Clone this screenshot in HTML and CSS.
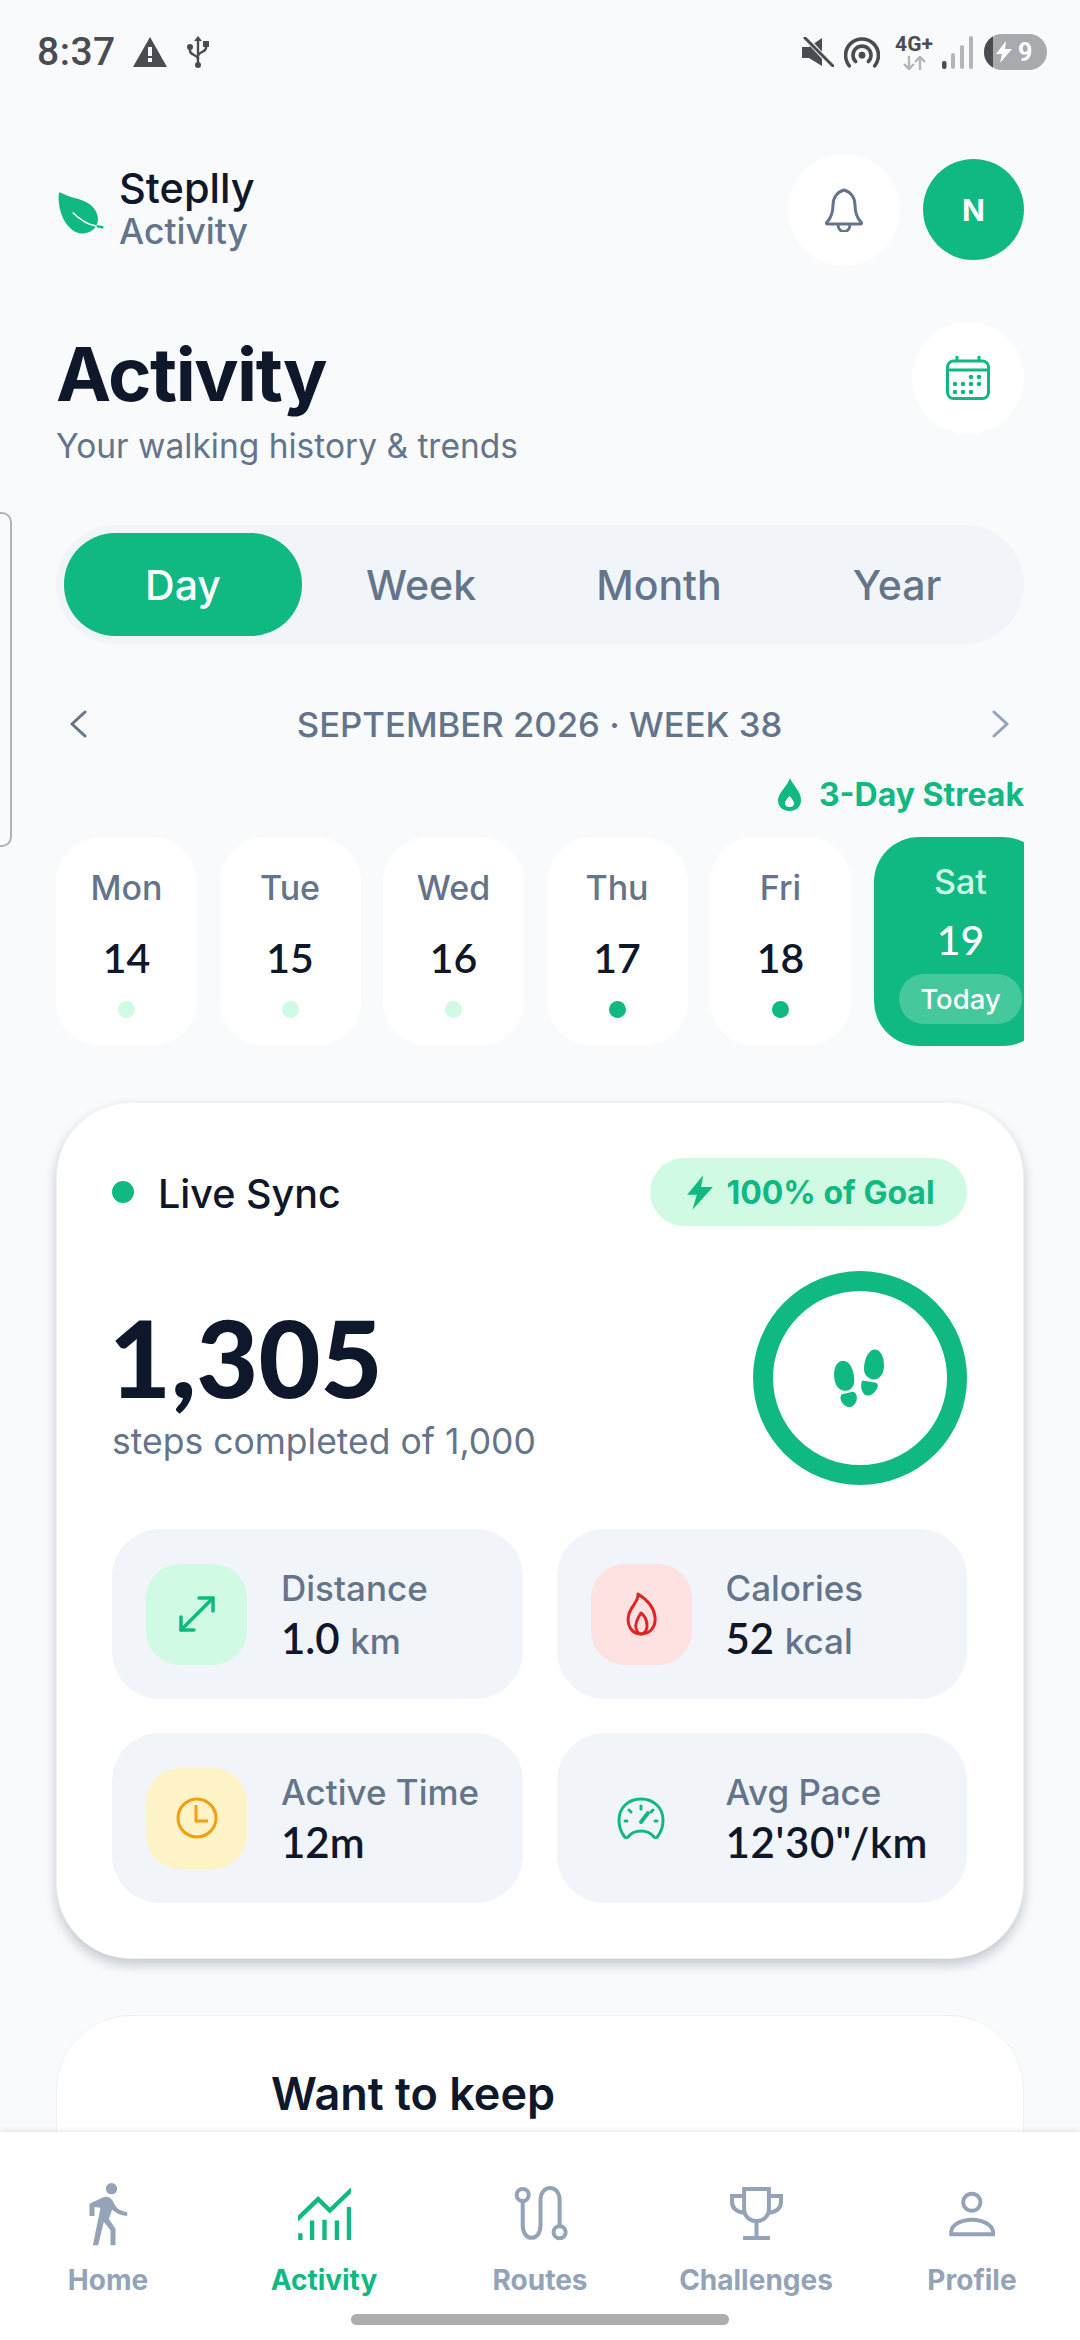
FILE: index.html
```html
<!DOCTYPE html>
<html lang="en">
    <head>
        <meta charset="UTF-8" />
        <meta name="viewport" content="width=device-width, initial-scale=1.0" />
        <title>Steplly Activity</title>
        <link rel="stylesheet" href="styles.css">
    </head>
    <body>
        <div class="app">
            <div class="status-bar">
                <div class="status-left">
                    <span class="status-time">8:37</span>
                    <svg class="warn-icon" viewBox="0 0 34 30"><path d="M17 0 L34 30 H0 Z" fill="#4a4c52"/><rect x="15" y="10" width="4" height="9" fill="#f8fafc"/><rect x="15" y="21" width="4" height="4" fill="#f8fafc"/></svg>
                    <svg class="usb-icon" viewBox="0 0 24 32" fill="none" stroke="#4a4c52" stroke-width="2.4"><path d="M12 4 V28"/><path d="M4 11 V15 C4 19 12 19 12 23"/><path d="M20 8 V12 C20 16 12 16 12 20"/><circle cx="4" cy="11" r="3" fill="#4a4c52" stroke="none"/><rect x="17" y="5" width="6" height="6" fill="#4a4c52" stroke="none"/><circle cx="12" cy="29" r="3" fill="#4a4c52" stroke="none"/><path d="M8 5 L12 0 L16 5 Z" fill="#4a4c52" stroke="none"/></svg>
                </div>
                <div class="status-right">
                    <svg class="mute-icon" viewBox="0 0 32 30"><path d="M0 10 H7 L20 1 V29 L7 21 H0 Z" fill="#4a4c52"/><path d="M3 0 L31 30" stroke="#f8fafc" stroke-width="5"/><path d="M3 1 L31 29" stroke="#4a4c52" stroke-width="3" stroke-linecap="round"/></svg>
                    <svg class="hotspot-icon" viewBox="0 0 34 30" fill="none" stroke="#4a4c52" stroke-width="3.400" stroke-linecap="round"><path d="M5 28 A15.500 15.500 0 1 1 29 28"/><path d="M11 24 A8.500 8.500 0 1 1 23 24"/><circle cx="17" cy="18" r="3.200" fill="#4a4c52" stroke="none"/></svg>
                    <div class="net-type">
                        <span class="net-label">4G+</span>
                        <svg class="net-arrows" viewBox="0 0 24 14" fill="none" stroke="#b4b5b8" stroke-width="2.400"><path d="M7 0 V13 M2 8 L7 13 L12 8"/><path d="M18 14 V1 M13 6 L18 1 L23 6"/></svg>
                    </div>
                    <svg class="signal-icon" viewBox="0 0 31 33" fill="#b4b5b8"><rect x="0" y="25" width="4.500" height="8" rx="2" fill="#4a4c52"/><rect x="9" y="17" width="4" height="16" rx="2"/><rect x="18" y="9" width="4" height="24" rx="2"/><rect x="27" y="0" width="4" height="33" rx="2"/></svg>
                    <div class="battery">
                        <span class="battery-fill"></span>
                        <svg class="battery-bolt" viewBox="0 0 16 22"><path d="M10 0 L0 13 H6 L4 22 L16 8 H9 Z" fill="#fff"/></svg>
                        <span class="battery-level">9</span>
                    </div>
                </div>
            </div>

            <div class="content">
                <header class="top-row">
                    <div class="brand">
                        <svg class="leaf" viewBox="50 105 150 140"><path d="M60 115 C62 112 68 120 100 130 C150 140 178 165 176 200 C172 225 150 240 125 238 C85 232 55 180 58 120 Z" fill="#10b981"/><path d="M100 175 C120 195 145 212 172 216" fill="none" stroke="#f8fafc" stroke-width="5"/><path d="M172 216 L192 220" stroke="#10b981" stroke-width="7"/></svg>
                        <div class="brand-text">
                            <div class="brand-name">Steplly</div>
                            <div class="brand-sub">Activity</div>
                        </div>
                    </div>
                    <div class="top-actions">
                        <div class="round-btn">
                            <svg class="bell" viewBox="0 0 38 44" fill="none" stroke="#64748b" stroke-width="3" stroke-linejoin="round"><path d="M19 2 C12 4 8 10 8 17 C8 26 6 30 2 34 C1 35 1 36 3 36 H35 C37 36 37 35 36 34 C32 30 30 26 30 17 C30 10 26 4 19 2 Z"/><path d="M13 36 C13 46 25 46 25 36"/></svg>
                        </div>
                        <div class="avatar">N</div>
                    </div>
                </header>

                <section class="title-row">
                    <div>
                        <h1 class="page-title">Activity</h1>
                        <p class="page-sub">Your walking history &amp; trends</p>
                    </div>
                    <div class="round-btn">
                        <svg class="calendar" viewBox="0 0 44 44" fill="none" stroke="#10b981" stroke-width="3"><rect x="1.500" y="5" width="41" height="37.500" rx="6"/><path d="M2 14 H42"/><path d="M11 0 V6 M33 0 V6"/><g fill="#10b981" stroke="none"><circle cx="25" cy="21" r="2.300"/><circle cx="33" cy="21" r="2.300"/><circle cx="9" cy="28" r="2.300"/><circle cx="17" cy="28" r="2.300"/><circle cx="25" cy="28" r="2.300"/><circle cx="33" cy="28" r="2.300"/><circle cx="9" cy="36" r="2.300"/><circle cx="17" cy="36" r="2.300"/><circle cx="25" cy="36" r="2.300"/></g></svg>
                    </div>
                </section>

                <div class="tabs">
                    <div class="tab tab-active">Day</div>
                    <div class="tab">Week</div>
                    <div class="tab">Month</div>
                    <div class="tab">Year</div>
                </div>

                <div class="date-nav">
                    <svg class="chevron" viewBox="0 0 17 28" fill="none" stroke="#64748b" stroke-width="3" stroke-linecap="round" stroke-linejoin="round"><path d="M15 2 L2 14 L15 26"/></svg>
                    <span class="date-label">SEPTEMBER 2026 · WEEK 38</span>
                    <svg class="chevron" viewBox="0 0 17 28" fill="none" stroke="#94a3b8" stroke-width="3" stroke-linecap="round" stroke-linejoin="round"><path d="M2 2 L15 14 L2 26"/></svg>
                </div>

                <div class="streak">
                    <svg class="streak-flame" viewBox="0 0 25 33"><path fill-rule="evenodd" d="M13 0 C15 6 24 13 24 22 C24 29 19 33 12.500 33 C6 33 1 29 1 22 C1 15 10 9 13 0 Z M12.500 18 C10 21 8 23 8 25 C8 28 10 29 12.500 29 C15 29 17 28 17 25 C17 23 15 21 12.500 18 Z" fill="#10b981"/></svg>
                    <span>3-Day Streak</span>
                </div>

                <div class="days">
                    <div class="day"><span class="day-name">Mon</span><span class="day-num">14</span><span class="day-dot"></span></div>
                    <div class="day"><span class="day-name">Tue</span><span class="day-num">15</span><span class="day-dot"></span></div>
                    <div class="day"><span class="day-name">Wed</span><span class="day-num">16</span><span class="day-dot"></span></div>
                    <div class="day"><span class="day-name">Thu</span><span class="day-num">17</span><span class="day-dot dot-done"></span></div>
                    <div class="day"><span class="day-name">Fri</span><span class="day-num">18</span><span class="day-dot dot-done"></span></div>
                    <div class="day day-today"><span class="day-name">Sat</span><span class="day-num">19</span><span class="today-pill">Today</span></div>
                </div>

                <section class="card">
                    <div class="card-head">
                        <div class="live"><span class="live-dot"></span><span class="live-text">Live Sync</span></div>
                        <div class="goal-pill">
                            <svg class="goal-bolt" viewBox="0 0 26 32"><path d="M16 0 L1 18 H10 L6 32 L25 11 H14 Z" fill="#10b981"/></svg>
                            100% of Goal
                        </div>
                    </div>

                    <div class="steps-row">
                        <div class="steps-text">
                            <div class="steps-num">1,305</div>
                            <div class="steps-sub">steps completed of 1,000</div>
                        </div>
                        <div class="ring">
                            <svg class="feet" viewBox="300 280 180 200"><g fill="#10b981"><path d="M340 327 C358 327 372 352 373 385 C373 408 358 418 342 417 C322 414 312 395 312 365 C313 343 324 327 340 327 Z"/><path d="M335 427 L368 420 C378 421 382 432 380 445 C375 462 360 470 348 463 C335 455 326 440 335 427 Z"/><path d="M436 293 C452 295 463 315 462 345 C460 370 448 384 430 383 C410 381 400 365 402 345 C405 315 418 292 436 293 Z"/><path d="M398 386 L438 393 C446 396 445 407 437 417 C427 432 412 435 403 427 C393 417 390 395 398 386 Z"/></g></svg>
                        </div>
                    </div>

                    <div class="stats">
                        <div class="stat">
                            <div class="stat-icon icon-mint">
                                <svg class="ico-arrows" viewBox="0 0 36 36" fill="none" stroke="#10b981" stroke-width="3.500" stroke-linecap="round" stroke-linejoin="round"><path d="M2 34 L34 2"/><path d="M20 2 H34 V15"/><path d="M2 21 V34 H15"/></svg>
                            </div>
                            <div>
                                <div class="stat-label">Distance</div>
                                <div class="stat-value">1.0 <span class="stat-unit">km</span></div>
                            </div>
                        </div>
                        <div class="stat">
                            <div class="stat-icon icon-pink">
                                <svg class="ico-flame" viewBox="0 0 31 44" fill="none" stroke="#dc2626" stroke-width="3" stroke-linejoin="round"><path d="M12 2 C13 9 5 14 3 22 C0 32 5 42 15 42 C25 42 30 34 29 25 C28 14 20 7 12 2 Z"/><path d="M15 21 C11 27 9 31 10 36 C11 40 13 42 15.500 42 C19 41 21 38 21 34 C21 29 19 24 15 21 Z"/></svg>
                            </div>
                            <div>
                                <div class="stat-label">Calories</div>
                                <div class="stat-value">52 <span class="stat-unit">kcal</span></div>
                            </div>
                        </div>
                        <div class="stat">
                            <div class="stat-icon icon-yellow">
                                <svg class="ico-clock" viewBox="0 0 42 42" fill="none" stroke="#f59e0b" stroke-width="3"><circle cx="21" cy="21" r="19"/><path d="M20 8 V24 H32"/></svg>
                            </div>
                            <div>
                                <div class="stat-label">Active Time</div>
                                <div class="stat-value">12m</div>
                            </div>
                        </div>
                        <div class="stat">
                            <div class="stat-icon">
                                <svg class="ico-gauge" viewBox="0 0 48 42" fill="none" stroke="#10b981" stroke-width="3" stroke-linecap="round"><path d="M24 2 C11 2 2 11 2 23 C2 30 4 35 7 39 C8 41 10 41 11 40 C14 36 19 34 24 34 C29 34 34 36 37 40 C38 41 40 41 41 39 C44 35 46 30 46 23 C46 11 37 2 24 2 Z"/><path d="M24 9 V12 M12 13 L14 15 M36 13 L34 15 M8 24 H10 M38 24 H40"/><path d="M31 16 L24 25" stroke-width="4"/></svg>
                            </div>
                            <div>
                                <div class="stat-label">Avg Pace</div>
                                <div class="stat-value value-pace">12'30"/km</div>
                            </div>
                        </div>
                    </div>
                </section>

                <section class="card promo">
                    <h2 class="promo-title">Want to keep</h2>
                </section>
            </div>

            <nav class="bottom-nav">
                <div class="nav-item">
                    <svg class="nav-walk" viewBox="50 35 125 195" fill="#94a3b8"><circle cx="123" cy="55" r="17"/><path d="M57 100 L100 80 C115 76 125 85 131 100 C138 115 150 122 170 125 V137 C150 135 135 128 125 118 L115 145 L135 175 V225 H120 V180 L100 155 L83 225 H67 L90 112 L72 110 V137 H57 Z"/></svg>
                    <span>Home</span>
                </div>
                <div class="nav-item nav-active">
                    <svg class="nav-chart" viewBox="680 55 158 155" fill="none" stroke="#10b981" stroke-width="13"><path d="M676 150 L740 88 L775 122 L842 58"/><path d="M687 210 V190 M722 210 V152 M759 210 V150 M796 210 V152 M832 210 V112"/></svg>
                    <span>Activity</span>
                </div>
                <div class="nav-item">
                    <svg class="nav-routes" viewBox="30 45 170 170" fill="none" stroke="#94a3b8" stroke-width="12"><circle cx="62" cy="75" r="18"/><path d="M62 93 V165 C62 215 115 215 115 165 V90 C115 42 172 42 172 90 V168"/><circle cx="172" cy="186" r="18"/></svg>
                    <span>Routes</span>
                </div>
                <div class="nav-item">
                    <svg class="nav-trophy" viewBox="680 45 170 170" fill="none" stroke="#94a3b8" stroke-width="12"><path d="M728 57 H802 V115 C802 165 728 165 728 115 Z"/><path d="M728 78 H692 V95 C692 115 708 125 728 128 M802 78 H838 V95 C838 115 822 125 802 128"/><path d="M765 155 V203 M725 203 H805"/></svg>
                    <span>Challenges</span>
                </div>
                <div class="nav-item">
                    <svg class="nav-profile" viewBox="1335 60 155 145" fill="none" stroke="#94a3b8" stroke-width="12"><circle cx="1412" cy="97" r="26"/><path d="M1350 194 V185 C1352 165 1380 150 1412 150 C1445 150 1472 165 1476 185 V194 Z"/></svg>
                    <span>Profile</span>
                </div>
            </nav>
            <div class="home-bar"></div>
            <div class="side-handle"></div>
        </div>
    </body>
</html>
```

FILE: styles.css
```css
* {
    box-sizing: border-box;
}

html,
body {
    margin: 0;
    padding: 0;
}

body {
    font-family: Inter, "Noto Sans", sans-serif;
    background-color: #f8fafc;
    color: #0f172a;
}

.app {
    position: relative;
    width: 1080px;
    height: 2340px;
    overflow: hidden;
}

/* status bar */
.status-bar {
    display: flex;
    justify-content: space-between;
    align-items: center;
    height: 104px;
    padding: 0 33px 0 37px;
}

.status-left,
.status-right {
    display: flex;
    align-items: center;
}

.status-time {
    font-family: Roboto, sans-serif;
    font-size: 39px;
    font-weight: 500;
    color: #4a4c52;
    letter-spacing: 0.5px;
}

.warn-icon {
    width: 34px;
    height: 30px;
    margin-left: 17px;
}

.usb-icon {
    width: 24px;
    height: 32px;
    margin-left: 19px;
}

.mute-icon {
    width: 32px;
    height: 30px;
}

.hotspot-icon {
    width: 36px;
    height: 32px;
    margin-left: 10px;
}

.net-type {
    display: flex;
    flex-direction: column;
    align-items: center;
    width: 42px;
    margin-left: 13px;
}

.net-label {
    font-family: Roboto, sans-serif;
    font-weight: 700;
    font-size: 21px;
    line-height: 18px;
    color: #4a4c52;
}

.net-arrows {
    width: 24px;
    height: 14px;
    margin-top: 3px;
}

.signal-icon {
    width: 31px;
    height: 33px;
    margin-left: 7px;
}

.battery {
    position: relative;
    display: flex;
    align-items: center;
    width: 63px;
    height: 36px;
    margin-left: 11px;
    padding-left: 12px;
    border-radius: 18px;
    background-color: #a9aaad;
    overflow: hidden;
}

.battery-fill {
    position: absolute;
    left: 0;
    top: 0;
    width: 9px;
    height: 36px;
    background-color: #4a4c52;
}

.battery-bolt {
    width: 16px;
    height: 22px;
}

.battery-level {
    margin-left: 6px;
    font-family: Roboto, sans-serif;
    font-weight: 700;
    font-size: 25px;
    color: #fff;
}

.content {
    padding: 0 56px;
}

/* header */
.top-row {
    display: flex;
    justify-content: space-between;
    align-items: center;
    height: 113px;
    margin-top: 49px;
}

.brand {
    display: flex;
    align-items: center;
    gap: 13px;
}

.leaf {
    width: 50px;
    height: 47px;
    margin-top: 6px;
}

.brand-name {
    font-size: 41.500px;
    line-height: 44px;
    font-weight: 500;
}

.brand-sub {
    margin-top: 1px;
    font-size: 35.500px;
    line-height: 42px;
    font-weight: 500;
    color: #64748b;
}

.top-actions {
    display: flex;
    align-items: center;
    gap: 23px;
}

.round-btn {
    display: flex;
    justify-content: center;
    align-items: center;
    width: 112px;
    height: 112px;
    border-radius: 50%;
    background-color: #fff;
}

.bell {
    width: 38px;
    height: 44px;
}

.avatar {
    display: flex;
    justify-content: center;
    align-items: center;
    width: 101px;
    height: 101px;
    border-radius: 50%;
    background-color: #10b981;
    color: #fff;
    font-size: 30px;
    font-weight: 700;
}

.title-row {
    display: flex;
    justify-content: space-between;
    align-items: flex-start;
    height: 146px;
    margin-top: 56px;
}

.page-title {
    margin: 10px 0 0;
    font-size: 74px;
    line-height: 84px;
    font-weight: 700;
    letter-spacing: -1.5px;
}

.page-sub {
    margin: 10px 0 0;
    font-size: 33.500px;
    line-height: 40px;
    color: #64748b;
}

.calendar {
    width: 44px;
    height: 44px;
}

/* day / week / month / year */
.tabs {
    display: flex;
    height: 119px;
    margin-top: 57px;
    padding: 8px;
    border-radius: 60px;
    background-color: #f1f5f9;
}

.tab {
    flex: 1;
    display: flex;
    justify-content: center;
    align-items: center;
    border-radius: 51px;
    font-size: 41px;
    font-weight: 500;
    color: #64748b;
}

.tab-active {
    background-color: #10b981;
    color: #fff;
}

.date-nav {
    display: flex;
    justify-content: space-between;
    align-items: center;
    height: 40px;
    margin-top: 60px;
    padding: 0 15px 0 14px;
}

.chevron {
    width: 17px;
    height: 28px;
}

.date-label {
    font-size: 34.700px;
    font-weight: 500;
    color: #64748b;
}

.streak {
    display: flex;
    justify-content: flex-end;
    align-items: center;
    gap: 17px;
    height: 40px;
    margin-top: 30px;
    font-size: 32px;
    font-weight: 700;
    color: #10b981;
}

.streak-flame {
    width: 25px;
    height: 33px;
}

.days {
    display: flex;
    gap: 22.500px;
    height: 209px;
    margin-top: 23px;
    overflow: hidden;
}

.day {
    flex: none;
    display: flex;
    flex-direction: column;
    align-items: center;
    width: 141px;
    padding-top: 30px;
    border-radius: 45px;
    background-color: #fff;
}

.day-name {
    font-size: 34px;
    line-height: 42px;
    font-weight: 500;
    color: #64748b;
}

.day-num {
    margin-top: 25px;
    font-family: Lato, sans-serif;
    font-size: 41px;
    line-height: 48px;
    font-weight: 600;
}

.day-dot {
    width: 17px;
    height: 17px;
    margin-top: 19px;
    border-radius: 50%;
    background-color: #d1fae5;
}

.dot-done {
    background-color: #10b981;
}

.day-today {
    width: 174px;
    padding-top: 24px;
    background-color: #10b981;
    color: #fff;
}

.day-today .day-name {
    color: #d1fae5;
}

.day-today .day-num {
    margin-top: 13px;
    font-weight: 500;
}

.today-pill {
    display: flex;
    justify-content: center;
    align-items: center;
    width: 123px;
    height: 50px;
    margin-top: 10px;
    border-radius: 25px;
    background-color: rgba(255, 255, 255, 0.22);
    font-size: 27.500px;
    font-weight: 500;
}

/* main card */
.card {
    margin-top: 56px;
    padding: 55px 56px 55px 55px;
    border: 1px solid #eef2f6;
    border-radius: 75px;
    background-color: #fff;
    box-shadow: 0 6px 12px rgba(15, 23, 42, 0.22);
}

.card-head {
    display: flex;
    justify-content: space-between;
    align-items: center;
    height: 68px;
}

.live {
    display: flex;
    align-items: center;
    gap: 24px;
    font-size: 39.500px;
    font-weight: 500;
}

.live-text {
    padding-top: 3px;
}

.live-dot {
    width: 22px;
    height: 22px;
    border-radius: 50%;
    background-color: #10b981;
}

.goal-pill {
    display: flex;
    justify-content: center;
    align-items: center;
    gap: 12px;
    width: 317px;
    height: 68px;
    padding-left: 4px;
    border-radius: 34px;
    background-color: #d1fae5;
    color: #10b981;
    font-size: 32px;
    font-weight: 700;
}

.goal-bolt {
    width: 28px;
    height: 35px;
}

.steps-row {
    display: flex;
    justify-content: space-between;
    align-items: flex-start;
    margin-top: 45px;
}

.steps-text {
    padding-top: 28px;
}

.steps-num {
    margin-left: -3px;
    font-family: Lato, sans-serif;
    font-size: 107px;
    line-height: 116px;
    font-weight: 900;
}

.steps-sub {
    margin-top: 5px;
    font-size: 35.500px;
    line-height: 44px;
    letter-spacing: 0;
    color: #64748b;
}

.ring {
    display: flex;
    justify-content: center;
    align-items: center;
    width: 214px;
    height: 214px;
    border: 20px solid #10b981;
    border-radius: 50%;
}

.feet {
    width: 60px;
    height: 67px;
}

.stats {
    display: grid;
    grid-template-columns: repeat(2, minmax(0, 1fr));
    gap: 34px;
    margin-top: 44px;
}

.stat {
    display: flex;
    align-items: center;
    gap: 34px;
    height: 170px;
    padding: 0 34px;
    border-radius: 48px;
    background-color: #f1f5f9;
}

.stat-icon {
    flex: none;
    display: flex;
    justify-content: center;
    align-items: center;
    width: 101px;
    height: 101px;
    border-radius: 34px;
}

.icon-mint {
    background-color: #d1fae5;
}

.icon-pink {
    background-color: #fee2e2;
}

.icon-yellow {
    background-color: #fef3c7;
}

.ico-arrows {
    width: 36px;
    height: 36px;
}

.ico-flame {
    width: 31px;
    height: 44px;
}

.ico-clock {
    width: 42px;
    height: 42px;
}

.ico-gauge {
    width: 48px;
    height: 42px;
}

.stat-label {
    font-size: 35px;
    line-height: 42px;
    font-weight: 500;
    color: #64748b;
}

.stat-value {
    margin-top: 6px;
    font-family: Lato, sans-serif;
    font-size: 42px;
    line-height: 46px;
    font-weight: 600;
    white-space: nowrap;
}

.value-pace {
    letter-spacing: 0.7px;
}

.stat-unit {
    font-family: Inter, sans-serif;
    font-size: 35px;
    line-height: 1;
    font-weight: 500;
    color: #64748b;
}

.promo {
    height: 300px;
    padding: 50px 0 0 214px;
    box-shadow: none;
}

.promo-title {
    margin: 0;
    font-size: 45px;
    line-height: 56px;
    font-weight: 600;
}

/* bottom nav sits over the scrolling content */
.bottom-nav {
    position: absolute;
    left: 0;
    right: 0;
    top: 2132px;
    bottom: 0;
    display: grid;
    grid-template-columns: repeat(5, 216px);
    padding-top: 48px;
    background-color: #fff;
    box-shadow: 0 -2px 5px rgba(15, 23, 42, 0.08);
}

.nav-item {
    display: flex;
    flex-direction: column;
    align-items: center;
    justify-content: flex-end;
    height: 117px;
    font-size: 28px;
    font-weight: 700;
    color: #94a3b8;
}

.nav-active {
    color: #10b981;
}

.nav-walk {
    width: 42px;
    height: 65px;
    margin-bottom: 16px;
}

.nav-chart {
    width: 53px;
    height: 52px;
    margin-bottom: 23px;
}

.nav-routes,
.nav-trophy {
    width: 57px;
    height: 57px;
    margin-bottom: 21px;
}

.nav-profile {
    width: 52px;
    height: 48px;
    margin-bottom: 25px;
}

.home-bar {
    position: absolute;
    left: 351px;
    top: 2314px;
    width: 378px;
    height: 11px;
    border-radius: 6px;
    background-color: #aeaeb2;
}

.side-handle {
    position: absolute;
    left: -10px;
    top: 512px;
    width: 22px;
    height: 335px;
    border: 2px solid #b0b3b8;
    border-radius: 10px;
}
```
